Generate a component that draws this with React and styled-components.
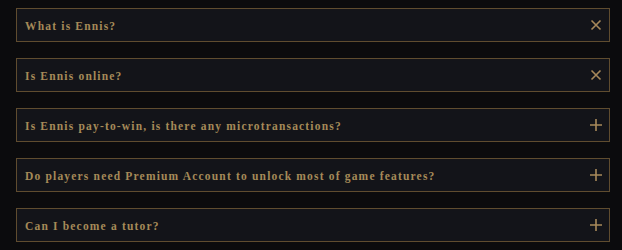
import React from "react";
import styled, { createGlobalStyle } from "styled-components";

const Global = createGlobalStyle`
  html, body { margin: 0; padding: 0; background: #0b0b0d; }
  body { width: 622px; height: 250px; overflow: hidden; }
`;

const List = styled.div`
  display: flex;
  flex-direction: column;
  gap: 16px;
  padding: 8px 12px 0 16px;
`;

const Item = styled.div`
  height: 34px;
  box-sizing: border-box;
  border: 1px solid #5f4c2f;
  background: #131419;
  display: flex;
  align-items: center;
  justify-content: space-between;
  padding: 0 6px 0 8px;
`;

const Question = styled.span`
  font-family: "Liberation Serif", serif;
  font-weight: bold;
  font-size: 11.5px;
  letter-spacing: 1.18px;
  color: #a58a58;
  padding-top: 1px;
`;

const Icon = styled.svg`
  width: 14px;
  height: 14px;
  flex: none;
  stroke: #a8895a;
  stroke-width: 1.6;
  fill: none;
`;

const items = [
  { q: "What is Ennis?", open: true },
  { q: "Is Ennis online?", open: true },
  { q: "Is Ennis pay-to-win, is there any microtransactions?", open: false },
  { q: "Do players need Premium Account to unlock most of game features?", open: false },
  { q: "Can I become a tutor?", open: false },
];

export default function App() {
  return (
    <>
      <Global />
      <List>
        {items.map((it) => (
          <Item key={it.q}>
            <Question>{it.q}</Question>
            <Icon viewBox="0 0 14 14">
              {it.open ? (
                <path d="M2.5 2.5 L11.5 11.5 M11.5 2.5 L2.5 11.5" />
              ) : (
                <path d="M7 1 L7 13 M1 7 L13 7" />
              )}
            </Icon>
          </Item>
        ))}
      </List>
    </>
  );
}
